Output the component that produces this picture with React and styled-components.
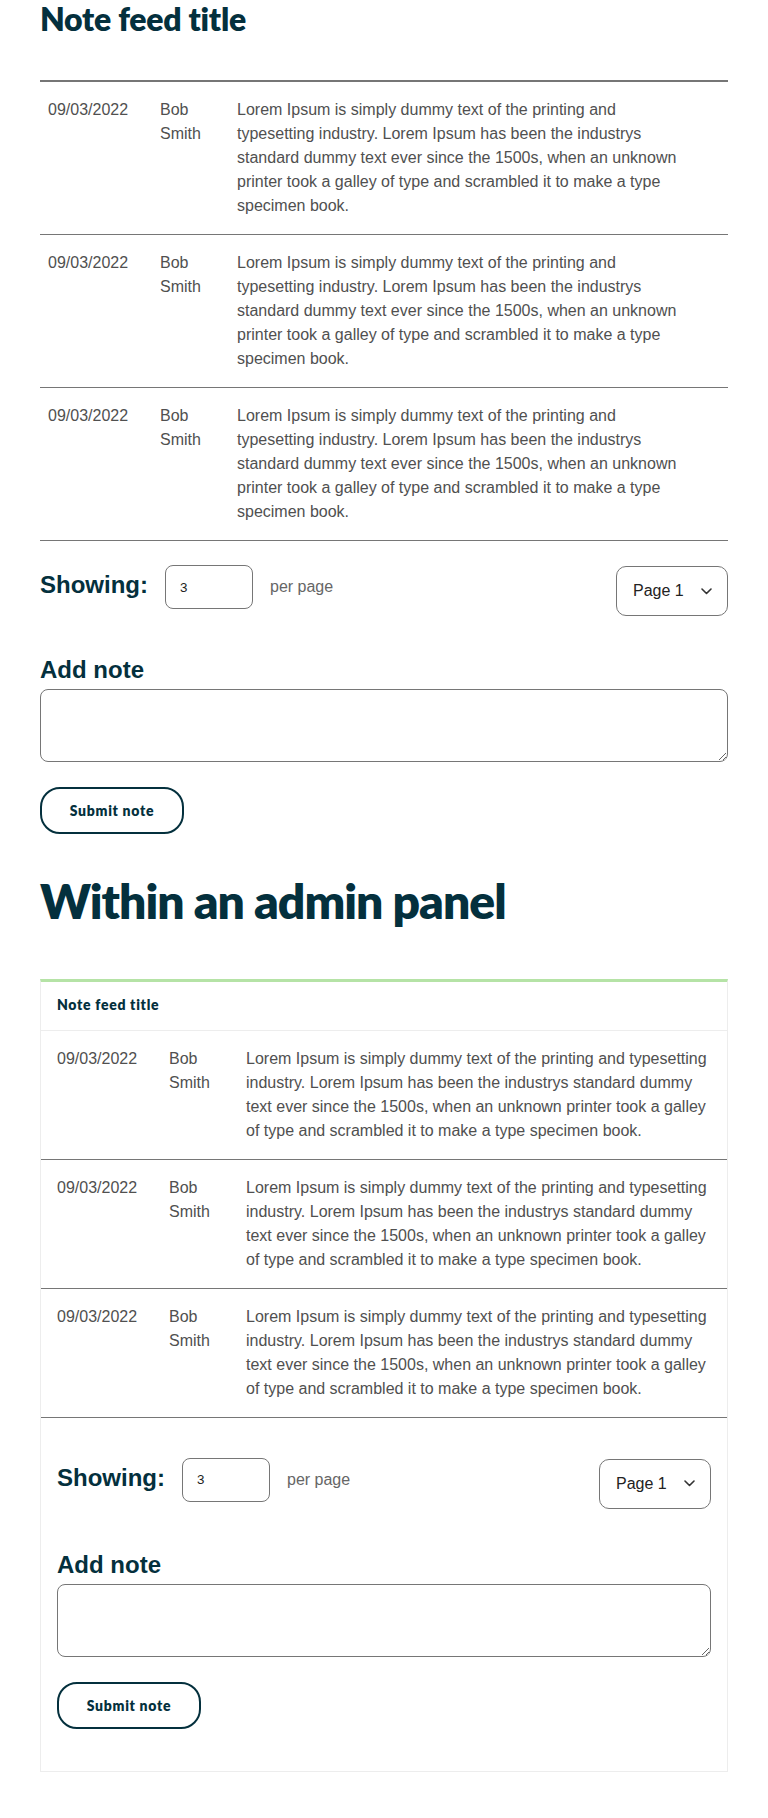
import React from 'react';
import styled, { createGlobalStyle } from 'styled-components';

const GlobalStyle = createGlobalStyle`
  body {
    margin: 0;
    background: #ffffff;
    font-family: "Liberation Sans", Arial, sans-serif;
    color: #505050;
  }
  * {
    box-sizing: border-box;
  }
`;

const NOTE_TEXT =
  'Lorem Ipsum is simply dummy text of the printing and typesetting industry. Lorem Ipsum has been the industrys standard dummy text ever since the 1500s, when an unknown printer took a galley of type and scrambled it to make a type specimen book.';

const notes = [
  { id: 1, date: '09/03/2022', author: 'Bob Smith', text: NOTE_TEXT },
  { id: 2, date: '09/03/2022', author: 'Bob Smith', text: NOTE_TEXT },
  { id: 3, date: '09/03/2022', author: 'Bob Smith', text: NOTE_TEXT },
];

const ChevronIcon = () => (
  <svg width="11" height="7" viewBox="0 0 11 7" fill="none">
    <path d="M1 1l4.5 4.5L10 1" stroke="#333" strokeWidth="1.6" strokeLinecap="round" strokeLinejoin="round" />
  </svg>
);

const NoteFeed = ({ inPanel }) => (
  <>
    <NoteList $inPanel={inPanel}>
      {notes.map((note) => (
        <NoteRow key={note.id} $inPanel={inPanel}>
          <NoteDate>{note.date}</NoteDate>
          <NoteAuthor>{note.author}</NoteAuthor>
          <NoteText>{note.text}</NoteText>
        </NoteRow>
      ))}
    </NoteList>
    <FeedFooter $inPanel={inPanel}>
      <Controls>
        <ShowingGroup>
          <ShowingLabel>Showing:</ShowingLabel>
          <PerPageInput type="text" defaultValue="3" />
          <PerPageText>per page</PerPageText>
        </ShowingGroup>
        <PageSelect type="button">
          <span>Page 1</span>
          <ChevronIcon />
        </PageSelect>
      </Controls>
      <AddNoteLabel $inPanel={inPanel}>Add note</AddNoteLabel>
      <NoteTextarea />
      <SubmitButton type="button">Submit note</SubmitButton>
    </FeedFooter>
  </>
);

const App = () => (
  <>
    <GlobalStyle />
    <Page>
      <FeedTitle>Note feed title</FeedTitle>
      <NoteFeed />

      <SectionTitle>Within an admin panel</SectionTitle>
      <Panel>
        <PanelHeader>Note feed title</PanelHeader>
        <NoteFeed inPanel />
      </Panel>
    </Page>
  </>
);

const headingFont = `"Lato", "Noto Sans", sans-serif`;

const Page = styled.div`
  padding: 0 40px 40px;
`;

const FeedTitle = styled.h2`
  margin: 0 0 42px;
  font-family: ${headingFont};
  font-size: 32px;
  line-height: 1.2;
  font-weight: 800;
  letter-spacing: -0.25px;
  color: #04303d;
`;

const SectionTitle = styled.h1`
  margin: 38px 0 49px;
  font-family: ${headingFont};
  font-size: 48px;
  line-height: 1.2;
  font-weight: 800;
  letter-spacing: -1px;
  color: #04303d;
`;

const NoteList = styled.div`
  border-top: ${(p) => (p.$inPanel ? 'none' : '2px solid #767676')};
`;

const NoteRow = styled.div`
  display: grid;
  grid-template-columns: 80px 45px 1fr;
  column-gap: 32px;
  padding: ${(p) => (p.$inPanel ? '16px 16px' : '16px 40px 16px 8px')};
  border-bottom: 1px solid #767676;
  font-size: 16px;
  line-height: 24px;
  color: #505050;
`;

const NoteDate = styled.div``;

const NoteAuthor = styled.div``;

const NoteText = styled.div``;

const FeedFooter = styled.div`
  padding: ${(p) => (p.$inPanel ? '40px 16px 42px' : '24px 0 0')};
`;

const Controls = styled.div`
  display: flex;
  justify-content: space-between;
  align-items: flex-start;
`;

const ShowingGroup = styled.div`
  display: flex;
  align-items: center;
  gap: 17px;
  height: 44px;
`;

const ShowingLabel = styled.span`
  font-size: 24px;
  font-weight: 700;
  color: #04303d;
  margin-bottom: 4px;
`;

const PerPageInput = styled.input`
  width: 88px;
  height: 44px;
  padding: 0 14px;
  border: 1px solid #767676;
  border-radius: 8px;
  font-family: "Liberation Sans", Arial, sans-serif;
  font-size: 13.33px;
  color: #222;
  outline: none;
`;

const PerPageText = styled.span`
  font-size: 16px;
  color: #666;
`;

const PageSelect = styled.button`
  display: flex;
  align-items: center;
  justify-content: space-between;
  width: 112px;
  height: 50px;
  margin-top: 1px;
  padding: 0 15px 0 16px;
  border: 1px solid #767676;
  border-radius: 10px;
  background: #fff;
  font-family: "Liberation Sans", Arial, sans-serif;
  font-size: 16px;
  color: #222;
  cursor: pointer;
`;

const AddNoteLabel = styled.label`
  display: block;
  margin: ${(p) => (p.$inPanel ? '42px' : '40px')} 0 5px;
  font-size: 24px;
  font-weight: 700;
  color: #04303d;
`;

const NoteTextarea = styled.textarea`
  display: block;
  width: 100%;
  height: 73px;
  border: 1px solid #767676;
  border-radius: 8px;
  padding: 8px 12px;
  font-family: "Liberation Sans", Arial, sans-serif;
  font-size: 16px;
  outline: none;
`;

const SubmitButton = styled.button`
  display: block;
  margin-top: 25px;
  width: 144px;
  height: 47px;
  border: 2px solid #04303d;
  border-radius: 20px;
  background: #fff;
  font-family: ${headingFont};
  font-size: 14px;
  font-weight: 800;
  letter-spacing: 0.7px;
  color: #04303d;
  cursor: pointer;
`;

const Panel = styled.section`
  border: 1px solid #ededed;
  border-top: 3px solid #b5e3a6;
`;

const PanelHeader = styled.div`
  padding: 15px 16px 16px;
  border-bottom: 1px solid #ededed;
  font-family: ${headingFont};
  font-size: 14px;
  line-height: 1.2;
  font-weight: 800;
  letter-spacing: 0.7px;
  color: #04303d;
`;

export default App;
